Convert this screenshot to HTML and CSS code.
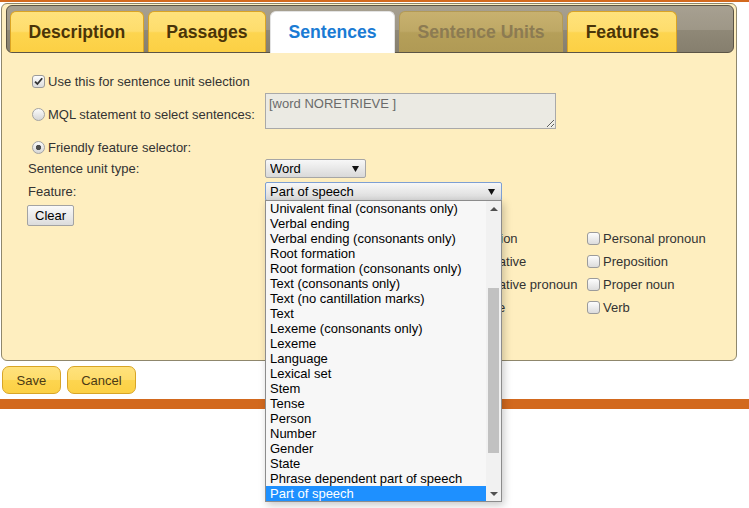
FILE: index.html
```html
<!DOCTYPE html>
<html>
<head>
<meta charset="utf-8">
<link rel="stylesheet" href="styles.css">
</head>
<body>
<div class="topline"></div>
<div class="dialog">
  <div class="tabbar">
    <div class="tab">Description</div>
    <div class="tab">Passages</div>
    <div class="tab active">Sentences</div>
    <div class="tab disabled">Sentence Units</div>
    <div class="tab">Features</div>
  </div>
  <div class="panel">
    <label class="row r1"><input type="checkbox" class="cb" checked><span>Use this for sentence unit selection</span></label>
    <div class="row r2">
      <label class="lbl r2lbl"><input type="radio" class="rb" name="mode"><span>MQL statement to select sentences:</span></label>
      <textarea class="mql" readonly>[word NORETRIEVE ]</textarea>
    </div>
    <label class="row r3"><input type="radio" class="rb" name="mode" checked><span>Friendly feature selector:</span></label>
    <div class="row r4">
      <span class="lbl">Sentence unit type:</span>
      <select class="sel sel-word"><option>Word</option></select>
    </div>
    <div class="row r5">
      <span class="lbl">Feature:</span>
      <div class="feat-wrap">
        <select class="sel sel-feat"><option>Part of speech</option></select>
        <div class="dropdown">
          <ul class="opts">
            <li>Univalent final (consonants only)</li>
            <li>Verbal ending</li>
            <li>Verbal ending (consonants only)</li>
            <li>Root formation</li>
            <li>Root formation (consonants only)</li>
            <li>Text (consonants only)</li>
            <li>Text (no cantillation marks)</li>
            <li>Text</li>
            <li>Lexeme (consonants only)</li>
            <li>Lexeme</li>
            <li>Language</li>
            <li>Lexical set</li>
            <li>Stem</li>
            <li>Tense</li>
            <li>Person</li>
            <li>Number</li>
            <li>Gender</li>
            <li>State</li>
            <li>Phrase dependent part of speech</li>
            <li class="sel-opt">Part of speech</li>
          </ul>
          <div class="sbar">
            <div class="sb-up"></div>
            <div class="sb-thumb"></div>
            <div class="sb-down"></div>
          </div>
        </div>
      </div>
    </div>
    <div class="row r6"><button class="btn-clear">Clear</button></div>
    <div class="cbgrid">
      <label class="cbi"><input type="checkbox" class="cb"><span>Adjective</span></label>
      <label class="cbi"><input type="checkbox" class="cb"><span>Adverb</span></label>
      <label class="cbi"><input type="checkbox" class="cb"><span>Article</span></label>
      <label class="cbi"><input type="checkbox" class="cb"><span>Conjunction</span></label>
      <label class="cbi"><input type="checkbox" class="cb"><span>Demonstrative pronoun</span></label>
      <label class="cbi"><input type="checkbox" class="cb"><span>Interjection</span></label>
      <label class="cbi"><input type="checkbox" class="cb"><span>Interrogative</span></label>
      <label class="cbi"><input type="checkbox" class="cb"><span>Interrogative pronoun</span></label>
      <label class="cbi"><input type="checkbox" class="cb"><span>Negative</span></label>
      <label class="cbi"><input type="checkbox" class="cb"><span>Noun</span></label>
      <label class="cbi"><input type="checkbox" class="cb"><span>Personal pronoun</span></label>
      <label class="cbi"><input type="checkbox" class="cb"><span>Preposition</span></label>
      <label class="cbi"><input type="checkbox" class="cb"><span>Proper noun</span></label>
      <label class="cbi"><input type="checkbox" class="cb"><span>Verb</span></label>
    </div>
  </div>
</div>
<div class="actions">
  <button class="btn">Save</button>
  <button class="btn">Cancel</button>
</div>
<div class="bar"></div>
</body>
</html>
```
FILE: styles.css
```css
* { box-sizing: border-box; }
html, body { margin: 0; background: #fff; }
body {
  min-height: 508px;
  font-family: "Liberation Sans", Arial, sans-serif;
  font-size: 13px;
  color: #333;
}
.topline { height: 2px; background: #d2691e; }

.dialog {
  margin: 1px 0 0 1px;
  width: 736px;
  border: 1px solid #8f876c;
  border-radius: 6px;
  background: #feeebf;
  padding: 1px 2px 18px 4px;
}

.tabbar {
  display: flex;
  align-items: flex-end;
  gap: 4px;
  height: 48px;
  border: 1px solid #5b5445;
  border-radius: 6px;
  background: linear-gradient(#a7a091 0%, #9e9787 52%, #8f8877 53%, #867f6e 100%);
  padding: 5px 0 0 3px;
}
.tab {
  height: 41px;
  padding: 0 17.5px;
  border: 1px solid #dba524;
  border-bottom: 0;
  border-radius: 6px 6px 0 0;
  background: linear-gradient(#ffe27c 0%, #fedd6c 48%, #fdd54f 52%, #fcd044 100%);
  font-weight: bold;
  font-size: 17.6px;
  line-height: 40px;
  color: #4a3408;
  white-space: nowrap;
}
.tab.active {
  background: #fff;
  border-color: #e3e3e3;
  color: #1a7bd4;
  height: 42px;
  margin-bottom: -1px;
}
.tab.disabled {
  background: linear-gradient(#c8b16f 0%, #bea865 48%, #b59f59 52%, #b09a55 100%);
  border-color: #b39a55;
  color: #8c7b52;
}

.panel {
  display: flex;
  flex-direction: column;
  padding-left: 22px;
}
.row { display: flex; align-items: center; }
.r1 { margin-top: 21px; height: 15px; }
.r2 { margin-top: 4px; align-items: flex-start; }
.r2lbl { margin-top: 14px; height: 15px; }
.r3 { margin-top: 11px; height: 15px; }
.r4, .r5, .r6 { margin-top: 4px; }
.lbl { width: 237px; display: flex; align-items: center; flex: none; }

.cb {
  -webkit-appearance: none;
  appearance: none;
  flex: none;
  width: 13px;
  height: 13px;
  margin: 0 3px 0 4px;
  border: 1px solid #9b9b9b;
  border-radius: 3px;
  background: linear-gradient(#fdfdfd, #dcdcdc);
}
.cb:checked {
  background:
    url("data:image/svg+xml,%3Csvg xmlns='http://www.w3.org/2000/svg' viewBox='0 0 11 11'%3E%3Cpath d='M2 5.6l2.4 2.4L9.2 2.2' fill='none' stroke='%23333' stroke-width='1.8'/%3E%3C/svg%3E") center / 11px 11px no-repeat,
    linear-gradient(#fdfdfd, #dcdcdc);
}
.rb {
  -webkit-appearance: none;
  appearance: none;
  flex: none;
  width: 13px;
  height: 13px;
  margin: 0 3px 0 4px;
  border: 1px solid #a3a3a3;
  border-radius: 50%;
  background: linear-gradient(#fbfbfb, #d6d6d6);
}
.rb:checked {
  background:
    radial-gradient(circle, #4e4e4e 0 2.3px, rgba(0,0,0,0) 3px),
    linear-gradient(#fbfbfb, #d6d6d6);
}

.mql {
  width: 291px;
  height: 36px;
  margin: 0;
  border: 1px solid #a9a9a9;
  border-radius: 0;
  background: #ebeae3;
  color: #6a6a6a;
  font: 13px "Liberation Sans", Arial, sans-serif;
  padding: 2px 3px;
  resize: both;
  outline: none;
}

.sel {
  -webkit-appearance: none;
  appearance: none;
  height: 19px;
  margin: 0;
  border: 1px solid #a6a6a6;
  border-radius: 2px;
  background:
    url("data:image/svg+xml,%3Csvg xmlns='http://www.w3.org/2000/svg' viewBox='0 0 7 6'%3E%3Cpath d='M0 0h7L3.5 6z' fill='%23111'/%3E%3C/svg%3E") right 6px center / 7px 6px no-repeat,
    linear-gradient(#f7f7f7, #d9d9d9);
  font: 13px "Liberation Sans", Arial, sans-serif;
  color: #000;
  padding: 0 4px;
  outline: none;
}
.sel-word { width: 101px; }
.sel-feat { width: 237px; border-color: #7d9fd3; display: block; }

.feat-wrap { position: relative; }
.dropdown {
  position: absolute;
  z-index: 10;
  left: 0;
  top: 18px;
  width: 237px;
  height: 302px;
  border: 1px solid #8c8c8c;
  background: #f7f7f7;
  display: flex;
  box-shadow: 2px 3px 8px rgba(0, 0, 0, 0.22);
}
.opts {
  list-style: none;
  margin: 0;
  padding: 0;
  flex: 1;
  color: #000;
}
.opts li {
  height: 15px;
  line-height: 15px;
  padding-left: 4px;
  white-space: nowrap;
}
.opts li.sel-opt { background: #1e90ff; color: #fff; }
.sbar {
  width: 15px;
  flex: none;
  background: #f1f1f1;
  display: flex;
  flex-direction: column;
  align-items: flex-start;
}
.sb-up, .sb-down {
  width: 15px;
  height: 15px;
  flex: none;
  display: flex;
  align-items: center;
  justify-content: center;
}
.sb-up::before {
  content: "";
  border-left: 4px solid transparent;
  border-right: 4px solid transparent;
  border-bottom: 4px solid #505050;
}
.sb-down::before {
  content: "";
  border-left: 4px solid transparent;
  border-right: 4px solid transparent;
  border-top: 4px solid #505050;
}
.sb-thumb {
  width: 11px;
  height: 165px;
  margin: 72px 0 0 2px;
  background: #c1c1c1;
}
.sb-down { margin-top: auto; }

.btn-clear {
  height: 21px;
  margin: 0 0 0 -1px;
  padding: 0 7px;
  border: 1px solid #a3a3a3;
  border-radius: 2px;
  background: linear-gradient(#fafafa, #dcdcdc);
  font: 13px "Liberation Sans", Arial, sans-serif;
  color: #000;
}

.cbgrid {
  margin: 1px 0 0 237px;
  display: grid;
  grid-template-columns: 169px 149px auto;
  grid-template-rows: repeat(5, 23px);
  grid-auto-flow: column;
}
.cbi { display: flex; align-items: center; white-space: nowrap; }

.actions {
  display: flex;
  gap: 6px;
  margin: 5px 0 0 2px;
}
.btn {
  height: 28px;
  padding: 0 13.5px;
  border: 1px solid #d8a526;
  border-radius: 7px;
  background: linear-gradient(#ffe27c 0%, #fedd6c 48%, #fdd54f 52%, #fcd044 100%);
  color: #4b3a15;
  font: 13px "Liberation Sans", Arial, sans-serif;
}
.bar { height: 10px; margin-top: 5px; background: #d2691e; }
```
